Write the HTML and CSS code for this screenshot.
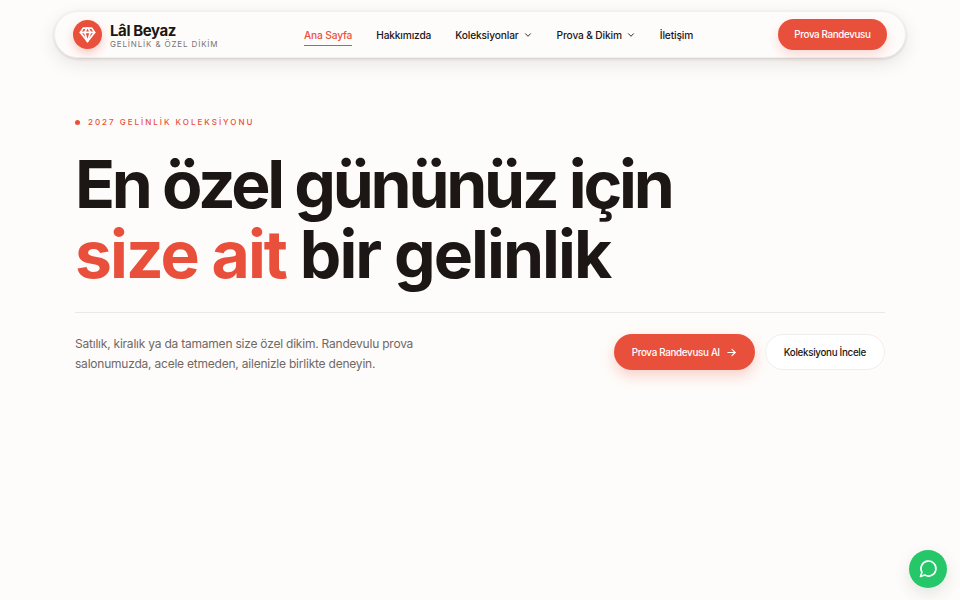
FILE: index.html
```html
<!DOCTYPE html>
<html lang="tr">
<head>
    <meta charset="UTF-8">
    <meta name="viewport" content="width=device-width, initial-scale=1.0">
    <title>Lâl Beyaz</title>
    <link rel="stylesheet" href="styles.css">
</head>
<body>
    <header class="navbar">
        <a class="brand" href="#">
            <span class="brand-icon">
                <svg width="17" height="17" viewBox="0 0 24 24" fill="none" stroke="#fff" stroke-width="2.4" stroke-linecap="round" stroke-linejoin="round">
                    <path d="M6 3h12l4 6-10 13L2 9z"/>
                    <path d="M11 3 8 9l4 13 4-13-3-6"/>
                    <path d="M2 9h20"/>
                </svg>
            </span>
            <span class="brand-text">
                <span class="brand-name">Lâl Beyaz</span>
                <span class="brand-sub">GELİNLİK &amp; ÖZEL DİKİM</span>
            </span>
        </a>
        <nav class="nav-links">
            <a class="nav-link active" href="#">Ana Sayfa</a>
            <a class="nav-link" href="#">Hakkımızda</a>
            <a class="nav-link" href="#">Koleksiyonlar
                <svg class="chevron" width="10" height="10" viewBox="0 0 24 24" fill="none" stroke="currentColor" stroke-width="2.2" stroke-linecap="round" stroke-linejoin="round"><path d="m6 9 6 6 6-6"/></svg>
            </a>
            <a class="nav-link" href="#">Prova &amp; Dikim
                <svg class="chevron" width="10" height="10" viewBox="0 0 24 24" fill="none" stroke="currentColor" stroke-width="2.2" stroke-linecap="round" stroke-linejoin="round"><path d="m6 9 6 6 6-6"/></svg>
            </a>
            <a class="nav-link" href="#">İletişim</a>
        </nav>
        <a class="nav-cta" href="#">Prova Randevusu</a>
    </header>

    <main class="hero">
        <div class="eyebrow"><span class="dot"></span>2027 GELİNLİK KOLEKSİYONU</div>
        <h1 class="hero-title">
            <span class="title-top">En özel gününüz için</span>
            <span class="title-bottom"><span class="accent">size ait</span> bir gelinlik</span>
        </h1>
        <div class="hero-bottom">
            <p class="hero-text">Satılık, kiralık ya da tamamen size özel dikim. Randevulu prova salonumuzda, acele etmeden, ailenizle birlikte deneyin.</p>
            <div class="hero-actions">
                <a class="btn btn-primary" href="#">Prova Randevusu Al
                    <svg width="11" height="11" viewBox="0 0 24 24" fill="none" stroke="currentColor" stroke-width="2.4" stroke-linecap="round" stroke-linejoin="round"><path d="M4 12h16"/><path d="m13 5 7 7-7 7"/></svg>
                </a>
                <a class="btn btn-ghost" href="#">Koleksiyonu İncele</a>
            </div>
        </div>
    </main>

    <a class="whatsapp" href="#">
        <svg width="20" height="20" viewBox="0 0 24 24" fill="none" stroke="#fff" stroke-width="2" stroke-linecap="round" stroke-linejoin="round">
            <path d="M3 21l1.7-5.1A9 9 0 1 1 8.1 19.3z"/>
        </svg>
    </a>
</body>
</html>
```

FILE: styles.css
```css
* {
    box-sizing: border-box;
}
html, body {
    height: 100%;
}
body {
    margin: 0;
    background: #fefcfa;
    color: #1c1614;
    font-family: Inter, "Noto Sans", sans-serif;
    overflow: hidden;
    padding-top: 11px;
}
a {
    color: inherit;
    text-decoration: none;
}
.navbar {
    display: flex;
    align-items: center;
    width: 852px;
    height: 47px;
    margin: 0 auto;
    padding: 0 18px;
    background: #fefcfb;
    border: 1px solid #f3efec;
    border-radius: 24px;
    box-shadow: 0 1px 3px rgba(40, 30, 25, 0.14), 0 6px 18px rgba(40, 30, 25, 0.1);
}
.brand {
    display: flex;
    align-items: center;
    gap: 8px;
    width: 231px;
}
.brand-icon {
    display: flex;
    align-items: center;
    justify-content: center;
    width: 29px;
    height: 29px;
    border-radius: 50%;
    background: #e9503b;
    box-shadow: 0 4px 10px rgba(233, 80, 59, 0.3);
}
.brand-text {
    display: flex;
    flex-direction: column;
    padding-top: 2px;
}
.brand-name {
    font-size: 15px;
    font-weight: 700;
    line-height: 17px;
    letter-spacing: -0.4px;
}
.brand-sub {
    font-size: 8px;
    line-height: 10px;
    letter-spacing: 0.85px;
    color: #7a7370;
}
.nav-links {
    display: flex;
    align-items: center;
    gap: 24px;
}
.nav-link {
    display: flex;
    align-items: center;
    gap: 4px;
    padding: 6px 0 4px;
    font-size: 10.2px;
    font-weight: 500;
    letter-spacing: -0.15px;
    border-bottom: 1.5px solid transparent;
}
.nav-link.active {
    color: #e9503b;
    border-bottom-color: #e9503b;
}
.nav-cta {
    margin-left: auto;
    padding: 10px 16.5px;
    font-size: 9.8px;
    font-weight: 500;
    letter-spacing: -0.35px;
    color: #fff;
    background: #e9503b;
    border-radius: 16px;
    box-shadow: 0 5px 12px rgba(233, 80, 59, 0.2);
}
.hero {
    padding: 59px 75px 0;
}
.eyebrow {
    display: flex;
    align-items: center;
    gap: 8px;
    font-size: 8px;
    font-weight: 500;
    letter-spacing: 2px;
    color: #e9503b;
}
.dot {
    width: 5px;
    height: 5px;
    border-radius: 50%;
    background: #e9503b;
}
.hero-title {
    margin: 22px 0 0;
    font-size: 66px;
    font-weight: 700;
    line-height: 70px;
}
.title-top,
.title-bottom {
    display: block;
}
.title-top {
    letter-spacing: -3.25px;
}
.title-bottom {
    letter-spacing: -1.95px;
}
.accent {
    color: #e9503b;
}
.hero-bottom {
    display: flex;
    justify-content: space-between;
    align-items: flex-start;
    margin-top: 23px;
    padding-top: 21px;
    border-top: 1px solid #ece8e5;
}
.hero-text {
    width: 350px;
    margin: 0;
    font-size: 12px;
    line-height: 20px;
    letter-spacing: -0.22px;
    color: #6f6865;
}
.hero-actions {
    display: flex;
    gap: 10px;
}
.btn {
    display: flex;
    align-items: center;
    gap: 6px;
    height: 36px;
    padding: 0 18px;
    font-size: 9.8px;
    font-weight: 500;
    letter-spacing: -0.3px;
    border-radius: 18px;
}
.btn-primary {
    color: #fff;
    background: #e9503b;
    box-shadow: 0 6px 14px rgba(233, 80, 59, 0.25);
}
.btn-ghost {
    padding: 0 18px;
    background: #fff;
    border: 1px solid #f1eeeb;
}
.whatsapp {
    position: fixed;
    right: 13px;
    bottom: 12px;
    display: flex;
    align-items: center;
    justify-content: center;
    width: 38px;
    height: 38px;
    border-radius: 50%;
    background: #25c768;
    box-shadow: 0 6px 16px rgba(20, 60, 40, 0.12);
}
```
